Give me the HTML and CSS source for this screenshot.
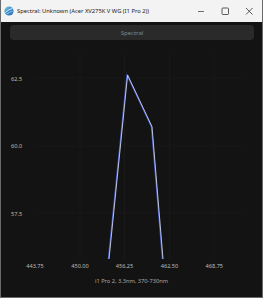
FILE: index.html
```html
<!DOCTYPE html>
<html lang="en">
<head>
    <meta charset="UTF-8">
    <meta name="viewport" content="width=device-width, initial-scale=1.0">
    <title>Spectral</title>
    <link rel="stylesheet" href="styles.css">
</head>
<body>
    <div class="window">
        <div class="titlebar">
            <svg class="app-icon" width="10" height="10" viewBox="0 0 10 10">
                <defs>
                    <linearGradient id="globe" x1="0" y1="0" x2="1" y2="1">
                        <stop offset="0" stop-color="#7fd0c8"/>
                        <stop offset="0.5" stop-color="#3b8fd0"/>
                        <stop offset="1" stop-color="#2a5fb0"/>
                    </linearGradient>
                </defs>
                <circle cx="5" cy="5" r="4.6" fill="url(#globe)"/>
                <path d="M1.5 6.5 Q5 3 8.5 2.5" stroke="#e8f4ff" stroke-width="0.9" fill="none"/>
                <path d="M2.5 8.2 Q6 6 8.8 5.2" stroke="#cfe6f5" stroke-width="0.6" fill="none"/>
            </svg>
            <span class="title">Spectral: Unknown (Acer XV275K V WG (I1 Pro 2))</span>
            <div class="controls">
                <svg width="10" height="10" viewBox="0 0 10 10"><path d="M2 5.5 H8" stroke="#333" stroke-width="0.7"/></svg>
                <svg width="10" height="10" viewBox="0 0 10 10"><rect x="2" y="2" width="6.5" height="6.5" rx="0.8" stroke="#333" stroke-width="0.8" fill="none"/></svg>
                <svg width="10" height="10" viewBox="0 0 10 10"><path d="M2 2 L8.5 8.5 M8.5 2 L2 8.5" stroke="#333" stroke-width="0.8"/></svg>
            </div>
        </div>
        <div class="content">
            <button class="mode-btn">Spectral</button>
            <svg class="chart" width="261" height="228" viewBox="0 0 261 228">
                <g class="grid">
                    <line x1="34" y1="34" x2="240" y2="34"/>
                    <line x1="34" y1="102" x2="240" y2="102"/>
                    <line x1="34" y1="169" x2="240" y2="169"/>
                    <line x1="79" y1="10" x2="79" y2="215"/>
                    <line x1="123.5" y1="10" x2="123.5" y2="215"/>
                    <line x1="168.5" y1="10" x2="168.5" y2="215"/>
                    <line x1="213" y1="10" x2="213" y2="215"/>
                </g>
                <g class="ylabels">
                    <text x="10" y="36.5">62.5</text>
                    <text x="10" y="104">60.0</text>
                    <text x="10" y="171.5">57.5</text>
                </g>
                <g class="xlabels">
                    <text x="34" y="223.5">443.75</text>
                    <text x="79" y="223.5">450.00</text>
                    <text x="123.5" y="223.5">456.25</text>
                    <text x="168.5" y="223.5">462.50</text>
                    <text x="213.3" y="223.5">468.75</text>
                </g>
                <polyline class="curve-shade" points="107.4,215 126,31 150.4,82.7 161.4,215"/>
                <polyline class="curve" points="108,215 126.6,31 151,82.7 162,215"/>
            </svg>
            <div class="caption">i1 Pro 2, 3.3nm, 370-730nm</div>
        </div>
    </div>
</body>
</html>
```
FILE: styles.css
```css
html, body {
    margin: 0;
    padding: 0;
    background: #ffffff;
}
body {
    width: 263px;
    height: 300px;
    overflow: hidden;
    font-family: "Noto Sans", "Open Sans", sans-serif;
}
.window {
    width: 263px;
    height: 298px;
    box-sizing: border-box;
    border: 1px solid #6a6a6a;
    border-top: none;
    display: flex;
    flex-direction: column;
}
.titlebar {
    height: 22px;
    background: #f3f3f3;
    display: flex;
    align-items: center;
    padding-left: 3px;
}
.app-icon {
    margin-right: 3px;
}
.title {
    font-family: "Liberation Sans Narrow", "Noto Sans", sans-serif;
    font-size: 5.8px;
    color: #202020;
    white-space: nowrap;
}
.controls {
    margin-left: auto;
    display: flex;
    gap: 14px;
    padding-right: 8px;
}
.content {
    flex: 1;
    background: #131313;
    display: flex;
    flex-direction: column;
}
.mode-btn {
    margin: 3px 8px 0 9px;
    height: 15px;
    background: #2a2a2a;
    border: none;
    border-radius: 4px;
    color: #858585;
    font-family: inherit;
    font-size: 6px;
    padding: 0;
}
.chart {
    display: block;
    margin-top: 4px;
}
.grid line {
    stroke: #191919;
    stroke-width: 1;
}
.ylabels text, .xlabels text {
    fill: #bdbdbd;
    font-size: 5.6px;
    font-family: "Noto Sans", sans-serif;
}
.xlabels text {
    text-anchor: middle;
}
.curve-shade {
    fill: none;
    stroke: #3d55c8;
    stroke-width: 1.2;
}
.curve {
    fill: none;
    stroke: #cfd2ec;
    stroke-width: 0.9;
}
.caption {
    text-align: center;
    color: #a8a8a8;
    font-size: 5.7px;
    margin-top: 5px;
}
```
